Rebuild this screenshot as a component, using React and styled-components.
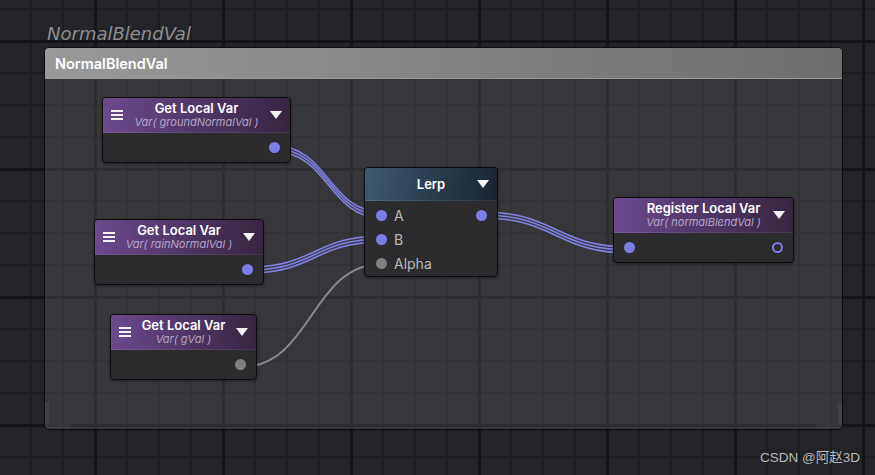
import React from "react";
import styled, { createGlobalStyle } from "styled-components";

const GlobalStyle = createGlobalStyle`
  html, body {
    margin: 0;
    padding: 0;
    width: 875px;
    height: 475px;
    overflow: hidden;
    background: #222327;
  }
`;

const Canvas = styled.div`
  position: relative;
  width: 875px;
  height: 475px;
  box-sizing: border-box;
  padding: 24px 0 0 44px;
  background-color: #232428;
  background-image:
    linear-gradient(to right, #131416 3px, transparent 3px),
    linear-gradient(to bottom, #131416 3px, transparent 3px),
    linear-gradient(to right, #1b1c1f 2px, transparent 2px),
    linear-gradient(to bottom, #1b1c1f 2px, transparent 2px);
  background-size: 128px 128px, 128px 128px, 32px 32px, 32px 32px;
  background-position: 94px 40px, 94px 40px, 30px 8px, 30px 8px;
  font-family: Inter, "Noto Sans", sans-serif;
`;

const GroupLabel = styled.div`
  margin-left: 3px;
  height: 23px;
  font-family: "DejaVu Sans", sans-serif;
  font-style: italic;
  font-size: 18px;
  line-height: 20px;
  color: #8e8e90;
`;

const Group = styled.div`
  width: 799px;
  height: 383px;
  box-sizing: border-box;
  border: 1px solid #0c0c0d;
  border-radius: 5px;
  display: flex;
  flex-direction: column;
  overflow: hidden;
  background: rgba(82, 82, 86, 0.42);
`;

const GroupHeader = styled.div`
  height: 30px;
  flex: none;
  display: flex;
  align-items: center;
  padding-left: 10px;
  background: linear-gradient(to right, #999999, #6d6d6d);
  border-bottom: 1px solid #9a9a9a;
  color: #ffffff;
  font-weight: 600;
  font-size: 14.5px;
`;

const GroupBody = styled.div`
  position: relative;
  flex: 1;
  &::before,
  &::after {
    content: "";
    position: absolute;
    bottom: 1px;
    width: 22px;
    height: 22px;
    border-bottom: 4px solid rgba(255, 255, 255, 0.05);
  }
  &::before {
    left: 0;
    border-left: 4px solid rgba(255, 255, 255, 0.06);
    border-bottom-left-radius: 3px;
  }
  &::after {
    right: 0;
    border-right: 4px solid rgba(255, 255, 255, 0.06);
    border-bottom-right-radius: 3px;
  }
`;

const Wires = styled.svg`
  position: absolute;
  left: 0;
  top: 0;
  width: 100%;
  height: 100%;
  overflow: visible;
  pointer-events: none;
`;

const Node = styled.div`
  position: absolute;
  box-sizing: border-box;
  border: 1px solid #0d0d0e;
  border-radius: 4px;
  background: #2c2c2f;
  overflow: hidden;
  box-shadow: 0 1px 3px rgba(0, 0, 0, 0.35);
`;

const NodeHeader = styled.div`
  height: ${(p) => p.$h || 35}px;
  display: flex;
  align-items: center;
  padding: 0 8px;
  box-sizing: border-box;
  border-bottom: 1px solid rgba(255, 255, 255, 0.08);
  background: ${(p) =>
    p.$kind === "lerp"
      ? "linear-gradient(100deg, #3f5b72 0%, #2a3d4e 50%, #1b2530 100%)"
      : "linear-gradient(to right, #6b4a8d 0%, #4d3565 55%, #37253f 100%)"};
`;

const Menu = styled.div`
  width: 12px;
  flex: none;
  display: flex;
  flex-direction: column;
  gap: 2px;
  span {
    height: 2px;
    background: #f2f2f2;
  }
`;

const Spacer = styled.div`
  width: 12px;
  flex: none;
`;

const Titles = styled.div`
  flex: 1;
  display: flex;
  flex-direction: column;
  align-items: center;
  white-space: nowrap;
`;

const Title = styled.div`
  color: #ffffff;
  font-weight: 600;
  font-size: 13px;
  line-height: 15px;
`;

const Sub = styled.div`
  color: #b4a4c6;
  font-style: italic;
  font-size: 11px;
  line-height: 13px;
`;

const Caret = styled.div`
  width: 0;
  height: 0;
  flex: none;
  border-left: 6px solid transparent;
  border-right: 6px solid transparent;
  border-top: 8px solid #f4f4f4;
`;

const NodeBody = styled.div`
  height: ${(p) => p.$h}px;
  display: flex;
  align-items: center;
  justify-content: ${(p) => p.$justify || "flex-end"};
  padding: 0 10px;
`;

const Pin = styled.div`
  width: 11px;
  height: 11px;
  flex: none;
  box-sizing: border-box;
  border-radius: 50%;
  background: ${(p) => (p.$hollow ? "transparent" : p.$gray ? "#7f7f80" : "#7d7de9")};
  border: ${(p) => (p.$hollow ? "2px solid #7d7de9" : "none")};
`;

const PortList = styled.div`
  display: grid;
  grid-template-columns: 1fr auto;
  padding: 2px 10px 0 11px;
`;

const Port = styled.div`
  height: 24px;
  display: flex;
  align-items: center;
  gap: 7px;
  color: #b8b8b8;
  font-size: 14px;
`;

const OutCell = styled.div`
  height: 24px;
  display: flex;
  align-items: center;
`;

const Watermark = styled.div`
  position: absolute;
  right: 15px;
  bottom: 9px;
  font-family: "Liberation Sans", "Noto Sans CJK SC", sans-serif;
  font-size: 13.5px;
  color: #b9b9bb;
`;

function Triple({ x1, y1, x2, y2 }) {
  const mx = (x1 + x2) / 2;
  const d = (o) =>
    `M${x1 - 4} ${y1 + o} L${x1} ${y1 + o} C${mx} ${y1 + o} ${mx} ${y2 + o} ${x2} ${y2 + o} L${x2 + 4} ${y2 + o}`;
  return (
    <g fill="none" stroke="#8080e2" strokeWidth="1.5">
      <path d={d(0)} stroke="rgba(125,125,223,0.08)" strokeWidth="8" />
      <path d={d(-3)} />
      <path d={d(0)} />
      <path d={d(3)} />
    </g>
  );
}

function Single({ x1, y1, x2, y2 }) {
  const mx = (x1 + x2) / 2;
  return (
    <path
      d={`M${x1} ${y1} C${mx} ${y1} ${mx} ${y2} ${x2} ${y2}`}
      fill="none"
      stroke="#8a8a8c"
      strokeWidth="2"
    />
  );
}

function VarNode({ x, y, w, title, sub, pin }) {
  return (
    <Node style={{ left: x, top: y, width: w }}>
      <NodeHeader>
        <Menu>
          <span />
          <span />
          <span />
        </Menu>
        <Titles>
          <Title>{title}</Title>
          <Sub>{sub}</Sub>
        </Titles>
        <Caret />
      </NodeHeader>
      <NodeBody $h={29}>
        <Pin $gray={pin === "gray"} />
      </NodeBody>
    </Node>
  );
}

export default function App() {
  return (
    <>
      <GlobalStyle />
      <Canvas>
        <GroupLabel>NormalBlendVal</GroupLabel>
        <Group>
          <GroupHeader>NormalBlendVal</GroupHeader>
          <GroupBody>
            <Wires>
              <Triple x1={230} y1={70} x2={337} y2={136} />
              <Triple x1={203} y1={191} x2={337} y2={160} />
              <Single x1={196} y1={288} x2={337} y2={185} />
              <Triple x1={437} y1={136} x2={585} y2={171} />
            </Wires>

            <VarNode x={57} y={18} w={189} title="Get Local Var" sub="Var( groundNormalVal )" />
            <VarNode x={49} y={140} w={170} title="Get Local Var" sub="Var( rainNormalVal )" />
            <VarNode x={65} y={235} w={147} title="Get Local Var" sub="Var( gVal )" pin="gray" />

            <Node style={{ left: 319, top: 88, width: 134, height: 110 }}>
              <NodeHeader $kind="lerp" $h={33}>
                <Spacer />
                <Titles>
                  <Title>Lerp</Title>
                </Titles>
                <Caret />
              </NodeHeader>
              <PortList>
                <Port>
                  <Pin />A
                </Port>
                <OutCell>
                  <Pin />
                </OutCell>
                <Port>
                  <Pin />B
                </Port>
                <OutCell />
                <Port>
                  <Pin $gray />Alpha
                </Port>
                <OutCell />
              </PortList>
            </Node>

            <Node style={{ left: 568, top: 118, width: 181 }}>
              <NodeHeader>
                <Spacer />
                <Titles>
                  <Title>Register Local Var</Title>
                  <Sub>Var( normalBlendVal )</Sub>
                </Titles>
                <Caret />
              </NodeHeader>
              <NodeBody $h={29} $justify="space-between">
                <Pin />
                <Pin $hollow />
              </NodeBody>
            </Node>
          </GroupBody>
        </Group>
        <Watermark>CSDN @阿赵3D</Watermark>
      </Canvas>
    </>
  );
}
